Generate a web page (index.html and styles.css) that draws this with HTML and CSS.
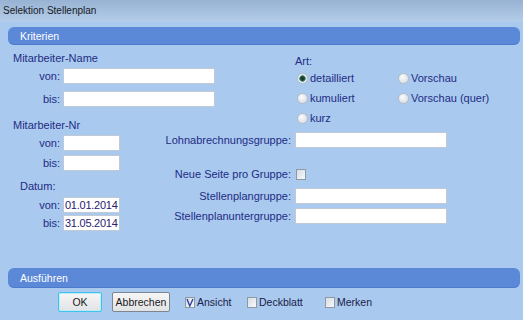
FILE: index.html
```html
<!DOCTYPE html>
<html lang="de">
<head>
  <meta charset="UTF-8" />
  <title>Selektion Stellenplan</title>
  <link rel="stylesheet" href="styles.css">
</head>
<body>
  <div class="dialog">
    <div class="titlebar">Selektion Stellenplan</div>

    <div class="panel">
      <div class="bar bar-kriterien">Kriterien</div>

      <div class="criteria">
        <!-- Mitarbeiter-Name -->
        <div class="name-block">
          <div class="heading">Mitarbeiter-Name</div>
          <div class="field field-first">
            <label>von:</label><input type="text" class="input-wide">
          </div>
          <div class="field field-name-bis">
            <label>bis:</label><input type="text" class="input-wide">
          </div>
        </div>

        <!-- Art -->
        <div class="art-block">
          <div class="heading">Art:</div>
          <div class="radios">
            <label class="radio"><input type="radio" name="art" checked>detailliert</label>
            <label class="radio"><input type="radio" name="art">Vorschau</label>
            <label class="radio"><input type="radio" name="art">kumuliert</label>
            <label class="radio"><input type="radio" name="art">Vorschau (quer)</label>
            <label class="radio"><input type="radio" name="art">kurz</label>
          </div>
        </div>

        <div class="heading nr-head">Mitarbeiter-Nr</div>

        <!-- Mitarbeiter-Nr / Datum -->
        <div class="lower-left">
          <div class="field field-first">
            <label>von:</label><input type="text" class="input-short">
          </div>
          <div class="field field-nr-bis">
            <label>bis:</label><input type="text" class="input-short">
          </div>
          <div class="heading datum-head">Datum:</div>
          <div class="field field-datum-von">
            <label>von:</label><input type="text" class="input-short input-date" value="01.01.2014">
          </div>
          <div class="field field-datum-bis">
            <label>bis:</label><input type="text" class="input-short input-date" value="31.05.2014">
          </div>
        </div>

        <!-- Gruppen -->
        <div class="groups">
          <div class="group-row">
            <label>Lohnabrechnungsgruppe:</label><input type="text" class="input-wide">
          </div>
          <div class="group-row group-neue-seite">
            <label>Neue Seite pro Gruppe:</label><span class="check"></span>
          </div>
          <div class="group-row group-stellen">
            <label>Stellenplangruppe:</label><input type="text" class="input-wide">
          </div>
          <div class="group-row group-unter">
            <label>Stellenplanuntergruppe:</label><input type="text" class="input-wide">
          </div>
        </div>
      </div>

      <div class="bar bar-ausfuehren">Ausführen</div>

      <div class="actions">
        <button class="btn btn-ok">OK</button>
        <button class="btn btn-cancel">Abbrechen</button>
        <label class="check-item item-ansicht">
          <span class="check checked">
            <svg width="8" height="9" viewBox="0 0 8 9"><path d="M1 1 L3.8 8 L7 1" fill="none" stroke="#2a3a9a" stroke-width="1.3"/></svg>
          </span>Ansicht
        </label>
        <label class="check-item item-deckblatt"><span class="check"></span>Deckblatt</label>
        <label class="check-item"><span class="check"></span>Merken</label>
      </div>
    </div>
  </div>
</body>
</html>
```

FILE: styles.css
```css
html, body {
  margin: 0;
  padding: 0;
  background-color: #a9c9ee;
  font-family: 'Liberation Sans', Arial, sans-serif;
}

.dialog {
  width: 523px;
  height: 320px;
  background-color: #a9c9ee;
  overflow: hidden;
}

.titlebar {
  height: 22px;
  line-height: 22px;
  padding-left: 3px;
  font-size: 10px;
  color: #161a22;
  background: linear-gradient(#98b2d3, #b4cdea);
}

.panel {
  padding: 5px 3px 0 8px;
}

.bar {
  border-radius: 6px;
  background-color: #5b88d7;
  border-bottom: 1px solid #4d7bcb;
  color: #fff;
  font-size: 10.5px;
  padding-left: 12px;
  box-sizing: border-box;
}

.bar-kriterien {
  height: 18px;
  line-height: 18px;
}

.bar-ausfuehren {
  height: 20px;
  line-height: 20px;
}

.criteria {
  height: 223px;
  display: grid;
  grid-template-columns: 142px 145px 1fr;
  grid-template-rows: auto auto auto;
  align-content: start;
  color: #1f2c85;
  font-size: 11px;
}

.heading {
  height: 14px;
  line-height: 14px;
}

.name-block {
  grid-column: 1 / 3;
  grid-row: 1;
  padding: 6px 0 0 5px;
}

.art-block {
  grid-column: 3;
  grid-row: 1 / 3;
  padding-top: 9px;
}

.nr-head {
  grid-column: 1;
  grid-row: 2;
  margin-top: 11px;
  padding-left: 5px;
}

.lower-left {
  grid-column: 1;
  grid-row: 3;
  padding-left: 5px;
}

.groups {
  grid-column: 2 / 4;
  grid-row: 3;
}

.field {
  display: flex;
  align-items: center;
  height: 16px;
  gap: 3px;
}

.field label {
  width: 47px;
  text-align: right;
}

.field-first { margin-top: 3px; }
.field-name-bis { margin-top: 7px; }
.field-nr-bis { margin-top: 4px; }
.field-datum-von { margin-top: 4px; }
.field-datum-bis { margin-top: 2px; }

.datum-head {
  margin-top: 8px;
  padding-left: 7px;
}

input[type="text"] {
  height: 16px;
  box-sizing: border-box;
  margin: 0;
  padding: 0 1px;
  border: 1px solid #bfcad6;
  background: #fff;
  font-family: 'Liberation Sans', Arial, sans-serif;
  font-size: 11px;
  color: #2a2070;
}

.input-wide { width: 152px; }
.input-short { width: 57px; }

.input-date {
  height: 17px;
  padding: 0;
  letter-spacing: -0.25px;
}

/* Art radios */
.radios {
  display: grid;
  grid-template-columns: 101px auto;
  grid-auto-rows: 20px;
  padding-left: 2px;
}

.radio {
  display: flex;
  align-items: center;
  gap: 2px;
}

.radio input {
  appearance: none;
  -webkit-appearance: none;
  margin: 0;
  width: 11px;
  height: 11px;
  border-radius: 50%;
  border: 1px solid #b3bcc6;
  background: radial-gradient(circle at 40% 35%, #fbfcfd, #cfd7df);
  box-sizing: border-box;
}

.radio input:checked {
  background: radial-gradient(circle, #16332a 0, #1f4a3c 2px, #5f9a88 3px, #eef2f4 3.6px, #d4dce3 100%);
}

/* Gruppen rows */
.group-row {
  display: flex;
  align-items: center;
  height: 16px;
  gap: 4px;
}

.group-row label {
  width: 141px;
  text-align: right;
}

.group-neue-seite { margin-top: 18px; }
.group-stellen { margin-top: 6px; }
.group-unter { margin-top: 4px; }

.check {
  display: inline-flex;
  align-items: center;
  justify-content: center;
  width: 10px;
  height: 11px;
  box-sizing: border-box;
  border: 1px solid #8e99a6;
  background: linear-gradient(135deg, #d6dde5, #f7f8fa);
}

.group-row .check {
  margin-left: 1px;
}

/* Ausführen */
.actions {
  display: flex;
  align-items: center;
  height: 20px;
  margin-top: 4px;
  padding-left: 50px;
  font-size: 10.5px;
}

.btn {
  height: 20px;
  margin: 0;
  padding: 0;
  box-sizing: border-box;
  font-family: 'Liberation Sans', Arial, sans-serif;
  font-size: 10.5px;
  color: #1a1a1a;
  background: linear-gradient(#f6f6f6, #e2e3e5);
  border-radius: 2px;
}

.btn-ok {
  width: 44px;
  border: 1px solid #3ec3ea;
  box-shadow: inset 0 0 0 1px #bfeaf7;
}

.btn-cancel {
  width: 58px;
  margin-left: 10px;
  border: 1px solid #7c8690;
}

.check-item {
  display: flex;
  align-items: center;
  gap: 2px;
  color: #1b2148;
}

.item-ansicht {
  margin-left: 15px;
  width: 62px;
}

.item-deckblatt {
  width: 78px;
}
```
